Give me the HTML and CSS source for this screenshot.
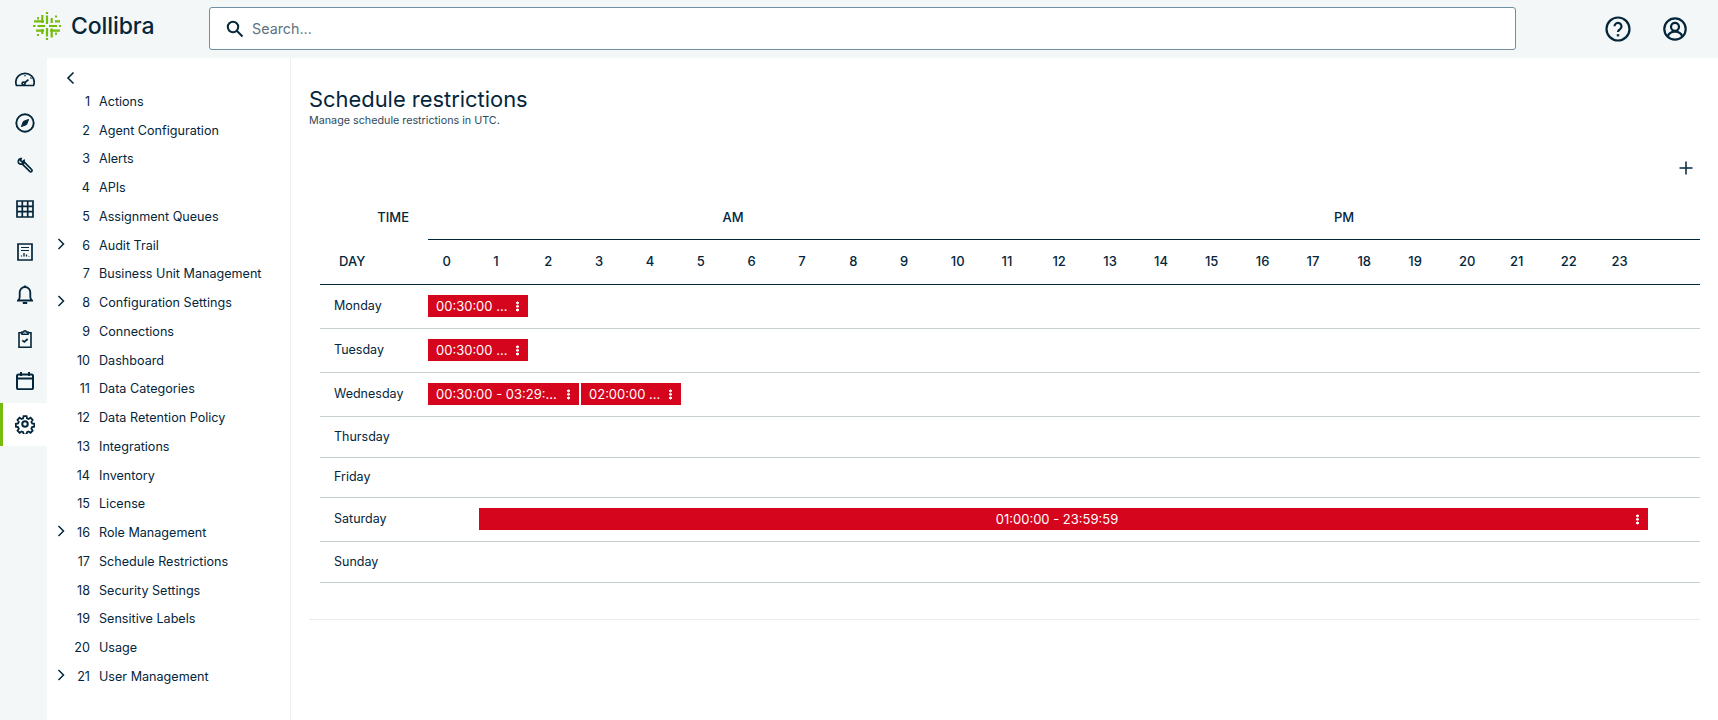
FILE: index.html
```html
<!DOCTYPE html>
<html lang="en">
<head>
<meta charset="utf-8">
<title>Schedule restrictions</title>
<link rel="stylesheet" href="styles.css">
</head>
<body>
<header class="topbar">
  <div class="logo">
    <svg class="logo-mark" width="28" height="28" viewBox="0 0 28 28" fill="none" stroke="#76bc0e" stroke-width="2.200">
      <path d="M1 9.300h10M22 9.300h5M0 14h2.500M4.500 14h7.500M16 14h8M26 14h2M3 18.700h8M17 18.700h10"/>
      <path d="M14 0v2M14 3.500v8.500M14 16v8.500M14 26v2M9.300 3v8M9.300 17v5M18.700 6v5M18.700 16.500v9"/>
      <path d="M5 5v2.500M23 20.500v2.500M4 23h2M22 4.500h2" stroke-width="1.800"/>
    </svg>
    <span class="logo-text">Collibra</span>
  </div>
  <div class="search">
    <svg width="20" height="20" viewBox="0 0 20 20" fill="none" stroke="#04263b" stroke-width="2"><circle cx="8" cy="8" r="5.200"/><path d="M12 12l5.500 5.500"/></svg>
    <span class="search-text">Search...</span>
  </div>
  <div class="top-actions">
    <svg width="26" height="26" viewBox="0 0 26 26" fill="none" stroke="#04263b" stroke-width="2.200"><circle cx="13" cy="13" r="11.500"/><path d="M9.500 10.300a3.500 3.500 0 1 1 5.600 2.800c-1.300.9-2.100 1.500-2.100 3"/><path d="M13 18.200v2.200" stroke-width="2.400"/></svg>
    <svg width="24" height="24" viewBox="0 0 24 24" fill="none" stroke="#04263b" stroke-width="2.200"><circle cx="12" cy="12" r="10.700"/><circle cx="12" cy="9.800" r="4"/><path d="M4.700 19.500c1.200-3.300 3.800-4.800 7.300-4.800s6.100 1.500 7.300 4.800"/></svg>
  </div>
</header>
<div class="shell">
  <nav class="rail">
    <a class="rail-item"><svg width="20" height="20" viewBox="0 0 20 20" fill="none" stroke="#04263b" stroke-width="1.700"><path d="M1.500 15.500c-.4-1-.7-2.400-.7-3.500a9.200 8.700 0 0 1 18.400 0c0 1.100-.3 2.500-.7 3.500z"/><circle cx="8.600" cy="13.600" r="1.500"/><path d="M10 12.500l3.500-2.800M15.500 8.500l.8-.6M10 5.300v1"/></svg></a>
    <a class="rail-item"><svg width="20" height="20" viewBox="0 0 20 20" fill="none" stroke="#04263b" stroke-width="1.900"><circle cx="10" cy="10" r="8.700"/><path d="M13.600 6.400l-2 5.200-5.200 2 2-5.200z" fill="#04263b" stroke-width="1"/></svg></a>
    <a class="rail-item"><svg width="17" height="17" viewBox="0 0 20 20" fill="none" stroke="#04263b" stroke-width="2"><path d="M5.500 1.500L3.800 3.600l2.400 2.300 2.100-1.800c.4 1.800-.2 3.800-2 4.300L15 17c.7.700 1.700.7 2.300 0 .6-.6.600-1.600-.1-2.300L8.600 6"/><path d="M5.500 1.500C3 1.700 1.300 3.500 1.500 5.800c.2 1.700 2 3.200 4.700 2.600"/></svg></a>
    <a class="rail-item"><svg width="18" height="18" viewBox="0 0 18 18" fill="none" stroke="#04263b" stroke-width="1.700"><path d="M1 1h16v16H1zM1 6.300h16M1 11.700h16M6.300 1v16M11.700 1v16"/></svg></a>
    <a class="rail-item"><svg width="16" height="18" viewBox="0 0 16 18" fill="none" stroke="#04263b" stroke-width="1.700"><path d="M1 1h14v16H1z"/><path d="M4 4.500h8M4 7.500h8" stroke-width="1.200"/><path d="M4.500 13.500v-1M7 13.500v-3.500M9.500 13.500v-2M12 13.500v-.5" stroke-width="1.300"/></svg></a>
    <a class="rail-item"><svg width="16" height="20" viewBox="0 0 16 20" fill="none" stroke="#04263b" stroke-width="1.800"><path d="M1 15.500c1.100-.8 1.700-1.700 1.700-3.500V7.300a5.300 5.300 0 0 1 10.600 0V12c0 1.800.6 2.700 1.700 3.500z"/><path d="M8 .5v1.500M5.800 18h4.400"/></svg></a>
    <a class="rail-item"><svg width="14" height="19" viewBox="0 0 14 19" fill="none" stroke="#04263b" stroke-width="1.600"><path d="M4 3.700H1v14.500h12V3.700h-3"/><path d="M4 5.200V3h1.700a1.300 1.300 0 0 1 2.600 0H10v2.200z"/><path d="M4.300 11.300l2 1.700 3.400-3" stroke-width="1.700"/></svg></a>
    <a class="rail-item"><svg width="18" height="18" viewBox="0 0 18 18" fill="none" stroke="#04263b" stroke-width="2"><rect x="1" y="2.500" width="16" height="14.700" rx="1.500"/><path d="M1 6.500h16M5 0v4M13 0v4"/></svg></a>
    <a class="rail-item active"><svg width="20" height="20" viewBox="0 0 24 24" fill="none" stroke="#04263b" stroke-width="2.400"><circle cx="12" cy="12" r="3.300"/><path d="M10 1.500h4l.6 3.100 2 .9 2.700-1.700 2.800 2.800-1.700 2.700.9 2 3 .6v3.800l-3 .6-.9 2 1.700 2.700-2.800 2.800-2.700-1.700-2 .9-.6 3h-4l-.6-3-2-.9-2.700 1.700-2.800-2.800 1.700-2.700-.9-2-3-.6v-3.800l3-.6.900-2-1.700-2.700 2.800-2.800 2.700 1.700 2-.9z" transform="translate(1.300 1.100) scale(.9)"/></svg></a>
  </nav>
  <aside class="tree">
    <svg class="back" width="10" height="14" viewBox="0 0 10 14" fill="none" stroke="#04263b" stroke-width="1.600"><path d="M7.500 1.500L2 7l5.500 5.500"/></svg>
    <ol class="tree-list">
      <li class="tree-row"><span class="num">1</span>Actions</li>
      <li class="tree-row"><span class="num">2</span>Agent Configuration</li>
      <li class="tree-row"><span class="num">3</span>Alerts</li>
      <li class="tree-row"><span class="num">4</span>APIs</li>
      <li class="tree-row"><span class="num">5</span>Assignment Queues</li>
      <li class="tree-row"><svg class="chev" width="8" height="12" viewBox="0 0 8 12" fill="none" stroke="#04263b" stroke-width="1.500"><path d="M1.500 1l5 5-5 5"/></svg><span class="num">6</span>Audit Trail</li>
      <li class="tree-row"><span class="num">7</span>Business Unit Management</li>
      <li class="tree-row"><svg class="chev" width="8" height="12" viewBox="0 0 8 12" fill="none" stroke="#04263b" stroke-width="1.500"><path d="M1.500 1l5 5-5 5"/></svg><span class="num">8</span>Configuration Settings</li>
      <li class="tree-row"><span class="num">9</span>Connections</li>
      <li class="tree-row"><span class="num">10</span>Dashboard</li>
      <li class="tree-row"><span class="num">11</span>Data Categories</li>
      <li class="tree-row"><span class="num">12</span>Data Retention Policy</li>
      <li class="tree-row"><span class="num">13</span>Integrations</li>
      <li class="tree-row"><span class="num">14</span>Inventory</li>
      <li class="tree-row"><span class="num">15</span>License</li>
      <li class="tree-row"><svg class="chev" width="8" height="12" viewBox="0 0 8 12" fill="none" stroke="#04263b" stroke-width="1.500"><path d="M1.500 1l5 5-5 5"/></svg><span class="num">16</span>Role Management</li>
      <li class="tree-row"><span class="num">17</span>Schedule Restrictions</li>
      <li class="tree-row"><span class="num">18</span>Security Settings</li>
      <li class="tree-row"><span class="num">19</span>Sensitive Labels</li>
      <li class="tree-row"><span class="num">20</span>Usage</li>
      <li class="tree-row"><svg class="chev" width="8" height="12" viewBox="0 0 8 12" fill="none" stroke="#04263b" stroke-width="1.500"><path d="M1.500 1l5 5-5 5"/></svg><span class="num">21</span>User Management</li>
    </ol>
  </aside>
  <main class="content">
    <h1 class="title">Schedule restrictions</h1>
    <p class="subtitle">Manage schedule restrictions in UTC.</p>
    <div class="add-row">
      <svg width="14" height="14" viewBox="0 0 14 14" stroke="#04263b" stroke-width="1.500"><path d="M7 .5v13M.5 7h13"/></svg>
    </div>
    <section class="schedule">
      <div class="head-top">
        <div class="head-time">TIME</div>
        <div class="ampm"><span class="am">AM</span><span class="pm">PM</span></div>
      </div>
      <div class="head-hours">
        <div class="head-day">DAY</div>
        <div class="hours">
          <span>0</span><span>1</span><span>2</span><span>3</span><span>4</span><span>5</span><span>6</span><span>7</span><span>8</span><span>9</span><span>10</span><span>11</span><span>12</span><span>13</span><span>14</span><span>15</span><span>16</span><span>17</span><span>18</span><span>19</span><span>20</span><span>21</span><span>22</span><span>23</span>
        </div>
      </div>
      <div class="day-row tall"><div class="day">Monday</div><div class="slots"><div class="bar short"><span class="bar-text">00:30:00 …</span><i class="dots"></i></div></div></div>
      <div class="day-row tall"><div class="day">Tuesday</div><div class="slots"><div class="bar short"><span class="bar-text">00:30:00 …</span><i class="dots"></i></div></div></div>
      <div class="day-row tall"><div class="day">Wednesday</div><div class="slots"><div class="bar medium"><span class="bar-text">00:30:00 - 03:29:…</span><i class="dots"></i></div><div class="bar short"><span class="bar-text">02:00:00 …</span><i class="dots"></i></div></div></div>
      <div class="day-row"><div class="day">Thursday</div><div class="slots"></div></div>
      <div class="day-row friday"><div class="day">Friday</div><div class="slots"></div></div>
      <div class="day-row tall"><div class="day">Saturday</div><div class="slots"><div class="bar long"><span class="bar-text centered">01:00:00 - 23:59:59</span><i class="dots"></i></div></div></div>
      <div class="day-row"><div class="day">Sunday</div><div class="slots"></div></div>
    </section>
    <div class="foot-rule"></div>
  </main>
</div>
</body>
</html>
```
FILE: styles.css
```css
* { box-sizing: border-box; }
html, body { margin: 0; height: 720px; overflow: hidden; }
body { font-family: Inter, "Liberation Sans", sans-serif; color: #04263b; background: #fff; font-size: 13px; }

.topbar { height: 58px; background: #f4f7f7; display: flex; align-items: center; }
.logo { width: 209px; height: 50px; padding-left: 33px; display: flex; align-items: center; gap: 10px; margin-top: -7px; }
.logo-mark { flex: none; }
.logo-text { font-size: 23px; font-weight: 450; letter-spacing: -0.1px; }
.search { width: 1307px; height: 43px; margin-top: -1px; background: #fff; border: 1px solid #6f8fa3; border-radius: 3px; display: flex; align-items: center; padding-left: 15px; gap: 7px; }
.search-text { font-size: 14.300px; color: #5d7283; }
.top-actions { display: flex; align-items: center; gap: 32px; margin-left: 89px; margin-top: -1px; }

.shell { display: flex; height: 662px; }
.rail { width: 47px; background: #f4f7f7; flex: none; display: flex; flex-direction: column; }
.rail-item { height: 43.100px; display: flex; align-items: center; justify-content: center; padding-left: 3px; flex: none; }
.rail-item.active { height: 43px; background: #fff; border-left: 3px solid #76bc0e; padding-left: 0; }
.tree { width: 244px; flex: none; border-right: 1px solid #eeeeee; padding-top: 13px; }
.back { display: block; margin-left: 19px; }
.tree-list { list-style: none; margin: 2px 0 0; padding: 0; }
.tree-row { height: 28.750px; position: relative; display: flex; align-items: center; font-size: 12.600px; color: #04263b; white-space: nowrap; }
.num { width: 43px; text-align: right; margin-right: 9px; flex: none; }
.chev { position: absolute; left: 10px; top: 7px; }

.content { flex: 1; padding: 28px 18px 0 18px; min-width: 0; }
.title { margin: 0; font-size: 21.900px; line-height: 26px; font-weight: 400; }
.subtitle { margin: 2px 0 0; font-size: 10.750px; line-height: 14px; color: #2f4a5c; }
.add-row { height: 26px; margin-top: 27px; display: flex; justify-content: flex-end; align-items: center; padding-right: 7px; }

.schedule { margin-left: 11px; }
.head-top { display: flex; height: 44px; margin-top: 15px; }
.head-time { width: 108px; padding-right: 19px; font-size: 13px; font-weight: 500; text-align: right; line-height: 43px; }
.ampm { flex: 1; border-bottom: 1px solid #04263b; display: flex; font-size: 13px; font-weight: 500; line-height: 43px; }
.am { width: 610px; text-align: center; }
.pm { width: 610px; text-align: center; padding-left: 2px; }
.head-hours { display: flex; height: 45px; border-bottom: 1px solid #04263b; }
.head-day { width: 108px; padding-left: 19px; font-size: 13px; font-weight: 500; line-height: 43px; }
.hours { flex: 1; display: grid; grid-template-columns: repeat(24, 50.830px); font-size: 13px; font-weight: 500; line-height: 43px; }
.hours span { padding-left: 14.500px; }

.day-row { display: flex; align-items: center; height: 41px; border-bottom: 1px solid #c8cfd2; }
.day-row.tall { height: 44px; }
.day-row.friday { height: 40px; }
.day { width: 108px; padding: 0 0 2px 14px; font-size: 12.500px; flex: none; }
.slots { flex: 1; display: flex; gap: 2px; }

.bar { height: 22px; background: #d4051c; color: #fff; font-size: 13px; display: flex; align-items: center; padding-left: 8px; white-space: nowrap; margin-top: -1px; }
.bar.short { width: 100px; }
.bar.medium { width: 151px; }
.bar.long { width: 1169px; margin-left: 51px; }
.bar-text { flex: 1; }
.bar-text.centered { text-align: center; padding-right: 9px; }
.dots { width: 3px; height: 11px; margin-right: 9px; flex: none; background: radial-gradient(circle, #fff 1.200px, transparent 1.500px) 0 0 / 3px 3.600px; }

.foot-rule { height: 1px; background: #ececec; margin-top: 36px; }
```
